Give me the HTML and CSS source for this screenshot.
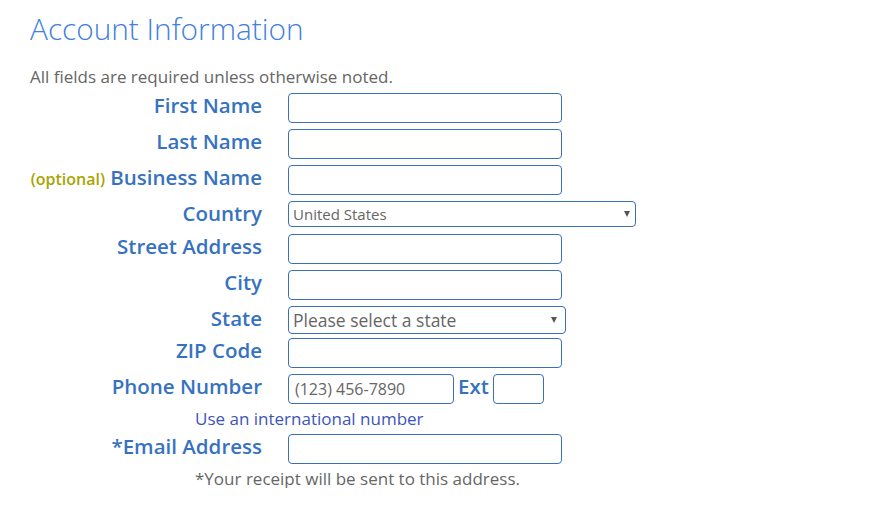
FILE: index.html
```html
<!DOCTYPE html>
<html>

<head>
    <title>Account Information</title>
    <link rel="stylesheet" href="styles.css">
</head>

<body>
    <div class="content">
        <h1>Account Information</h1>
        <p class="intro">All fields are required unless otherwise noted.</p>

        <form class="account-form">
            <div class="row">
                <label class="label" for="firstName">First Name</label>
                <input class="text-input" type="text" id="firstName">
            </div>
            <div class="row">
                <label class="label" for="lastName">Last Name</label>
                <input class="text-input" type="text" id="lastName">
            </div>
            <div class="row">
                <label class="label" for="businessName"><span class="optional">(optional)</span> Business Name</label>
                <input class="text-input" type="text" id="businessName">
            </div>
            <div class="row row-country">
                <label class="label" for="country">Country</label>
                <span class="select-wrap country-wrap">
                    <select class="select country-select" id="country">
                        <option>United States</option>
                    </select>
                </span>
            </div>
            <div class="row">
                <label class="label" for="street">Street Address</label>
                <input class="text-input" type="text" id="street">
            </div>
            <div class="row">
                <label class="label" for="city">City</label>
                <input class="text-input" type="text" id="city">
            </div>
            <div class="row row-state">
                <label class="label" for="state">State</label>
                <span class="select-wrap state-wrap">
                    <select class="select state-select" id="state">
                        <option>Please select a state</option>
                    </select>
                </span>
            </div>
            <div class="row">
                <label class="label" for="zip">ZIP Code</label>
                <input class="text-input" type="text" id="zip">
            </div>
            <div class="row">
                <label class="label" for="phone">Phone Number</label>
                <input class="text-input phone-input" type="text" id="phone" placeholder="(123) 456-7890">
                <label class="ext-label" for="ext">Ext</label>
                <input class="text-input ext-input" type="text" id="ext">
            </div>
            <p class="help">Use an international number</p>
            <div class="row">
                <label class="label" for="email">*Email Address</label>
                <input class="text-input" type="email" id="email">
            </div>
            <p class="note">*Your receipt will be sent to this address.</p>
        </form>
    </div>
</body>

</html>
```

FILE: styles.css
```css
body {
    margin: 0;
    font-family: "Open Sans", "Liberation Sans", sans-serif;
    background: #fff;
}

.content {
    padding: 8px 0 0 30px;
}

h1 {
    margin: 0;
    font-size: 29.8px;
    font-weight: 300;
    color: #3f80e0;
}

.intro {
    margin: 17px 0 0;
    font-size: 17px;
    line-height: 22px;
    color: #666;
}

.account-form {
    display: flex;
    flex-direction: column;
    gap: 6px;
    margin-top: 5px;
}

.row {
    display: flex;
    align-items: flex-start;
}

.row-country {
    margin-bottom: 1px;
}

.row-state {
    margin-bottom: -2px;
}

.label {
    width: 232px;
    margin-right: 26px;
    text-align: right;
    font-size: 20.5px;
    font-weight: 600;
    line-height: 24px;
    color: #3672c0;
}

.optional {
    font-size: 16px;
    color: #aaa400;
}

.text-input {
    box-sizing: border-box;
    width: 274px;
    height: 30px;
    padding: 0 6px;
    border: 1px solid #3a70b8;
    border-radius: 4px;
    font-family: inherit;
    font-size: 16px;
    color: #555;
    outline: none;
}

.text-input::placeholder {
    color: #666;
}

.phone-input {
    width: 166px;
}

.ext-label {
    margin: 0 4px 0 4px;
    font-size: 20.5px;
    font-weight: 600;
    line-height: 24px;
    color: #3672c0;
}

.ext-input {
    width: 51px;
}

.select-wrap {
    position: relative;
    display: block;
}

.select-wrap::after {
    content: '';
    position: absolute;
    right: 6px;
    top: 50%;
    margin-top: -3px;
    border-left: 3.5px solid transparent;
    border-right: 3.5px solid transparent;
    border-top: 6px solid #555;
    pointer-events: none;
}

.select {
    -webkit-appearance: none;
    appearance: none;
    box-sizing: border-box;
    display: block;
    padding: 0 4px;
    border: 1px solid #3a70b8;
    border-radius: 4px;
    background: #fff;
    font-family: inherit;
    color: #666;
    outline: none;
}

.country-select {
    width: 348px;
    height: 26px;
    font-size: 15px;
}

.state-select {
    width: 278px;
    height: 28px;
    font-size: 17.5px;
}

.state-wrap::after {
    right: 9px;
}

.help {
    margin: 0;
    padding-left: 165px;
    font-size: 17px;
    line-height: 18px;
    color: #3d55b8;
}

.note {
    margin: 0;
    padding-left: 165px;
    font-size: 17px;
    line-height: 18px;
    color: #666;
}
```
